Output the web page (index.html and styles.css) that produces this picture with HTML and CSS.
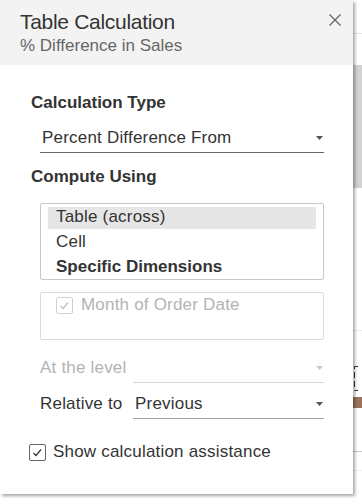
FILE: index.html
```html
<!DOCTYPE html>
<html lang="en">
<head>
    <meta charset="UTF-8">
    <meta name="viewport" content="width=device-width, initial-scale=1.0">
    <title>Table Calculation</title>
    <link rel="stylesheet" href="styles.css">
</head>
<body>
    <div class="screen">
        <div class="dialog">
            <div class="header">
                <div>
                    <div class="title">Table Calculation</div>
                    <div class="subtitle">% Difference in Sales</div>
                </div>
                <button class="close" aria-label="Close">
                    <svg width="12" height="12" viewBox="0 0 12 12">
                        <path d="M0.5 0.5 L11.5 11.5 M11.5 0.5 L0.5 11.5" stroke="#666" stroke-width="1.3" fill="none"/>
                    </svg>
                </button>
            </div>

            <div class="content">
                <h2>Calculation Type</h2>
                <div class="select main-select">
                    <span>Percent Difference From</span>
                    <svg class="arrow" width="7" height="4" viewBox="0 0 7 4"><polygon points="0,0 7,0 3.5,4" fill="#555"/></svg>
                </div>

                <h2 class="spaced">Compute Using</h2>
                <div class="listbox">
                    <div class="item selected">Table (across)</div>
                    <div class="item">Cell</div>
                    <div class="item bold">Specific Dimensions</div>
                </div>

                <div class="dims">
                    <label class="check-row disabled">
                        <span class="box">
                            <svg width="15" height="15" viewBox="0 0 15 15"><path d="M3.5 8 L6 10.5 L11 4.5" stroke="#bdbdbd" stroke-width="1.2" fill="none"/></svg>
                        </span>
                        Month of Order Date
                    </label>
                </div>

                <div class="levels">
                    <span class="label disabled">At the level</span>
                    <div class="select faint">
                        <span></span>
                        <svg class="arrow" width="7" height="4" viewBox="0 0 7 4"><polygon points="0,0 7,0 3.5,4" fill="#c8c8c8"/></svg>
                    </div>
                    <span class="label">Relative to</span>
                    <div class="select mid">
                        <span>Previous</span>
                        <svg class="arrow" width="7" height="4" viewBox="0 0 7 4"><polygon points="0,0 7,0 3.5,4" fill="#555"/></svg>
                    </div>
                </div>

                <label class="check-row assist">
                    <span class="box">
                        <svg width="15" height="15" viewBox="0 0 15 15"><path d="M3.5 8 L6 10.5 L11 4.5" stroke="#333" stroke-width="1.2" fill="none"/></svg>
                    </span>
                    Show calculation assistance
                </label>
            </div>
        </div>

        <div class="sheet">
            <div class="rule top-rule"></div>
            <div class="scroll-thumb"></div>
            <div class="rule soft-rule"></div>
            <svg class="bracket" width="9" height="25" viewBox="0 0 9 25">
                <path d="M5 0.5 H1.5 V24.5 H5" stroke="#333" stroke-width="1" fill="none" stroke-dasharray="6 3"/>
            </svg>
            <div class="bar"></div>
            <div class="rule mid-rule"></div>
            <div class="rule faint-rule"></div>
        </div>
    </div>
</body>
</html>
```

FILE: styles.css
```css
body {
    margin: 0;
    font-family: "Liberation Sans", Arial, sans-serif;
    background-color: #fff;
    color: #333;
}

.screen {
    display: flex;
    width: 362px;
    height: 504px;
    overflow: hidden;
}

.dialog {
    position: relative;
    z-index: 1;
    width: 353px;
    flex-shrink: 0;
    align-self: flex-start;
    background-color: #fff;
    box-shadow: 2px 2px 3px rgba(0, 0, 0, 0.35);
}

.header {
    display: flex;
    justify-content: space-between;
    align-items: flex-start;
    padding: 10px 12px 9px 20px;
    background-color: #f3f3f3;
}

.title {
    font-size: 21px;
    line-height: 24px;
    letter-spacing: -0.3px;
    color: #333;
}

.subtitle {
    margin-top: 2px;
    font-size: 17px;
    line-height: 20px;
    color: #666;
}

.close {
    width: 12px;
    height: 12px;
    margin-top: 4px;
    padding: 0;
    border: none;
    background: none;
    display: flex;
}

.content {
    padding: 28px 29px 32px 31px;
    font-size: 17px;
    line-height: 20px;
    letter-spacing: 0.2px;
}

h2 {
    margin: 0;
    font-size: 17px;
    line-height: 20px;
    font-weight: bold;
    letter-spacing: 0;
    color: #333;
}

h2.spaced {
    margin-top: 14px;
}

.select {
    display: flex;
    justify-content: space-between;
    align-items: center;
    height: 20px;
    padding: 0 1px 4px 2px;
    border-bottom: 1px solid #999;
}

.main-select {
    margin: 15px 0 0 9px;
    border-bottom-color: #666;
}

.select.faint {
    border-bottom-color: #d6d6d6;
}

.select.mid {
    border-bottom-color: #a6a6a6;
}

.listbox {
    display: flex;
    flex-direction: column;
    gap: 3px;
    margin: 16px 0 0 9px;
    padding: 3px 7px 0;
    border: 1px solid #c8c8c8;
    border-radius: 2px;
}

.item {
    padding: 0 8px 3px;
    line-height: 19px;
}

.item.selected {
    background-color: #e6e6e6;
}

.item.bold {
    font-weight: bold;
    letter-spacing: 0;
}

.dims {
    box-sizing: border-box;
    height: 48px;
    margin: 12px 0 0 9px;
    padding: 2px 15px;
    border: 1px solid #dcdcdc;
    border-radius: 2px;
}

.check-row {
    display: flex;
    align-items: center;
    gap: 8px;
    height: 20px;
}

.box {
    box-sizing: border-box;
    display: flex;
    align-items: center;
    justify-content: center;
    width: 17px;
    height: 17px;
    border: 1px solid #666;
    border-radius: 2px;
}

.disabled {
    color: #b3b3b3;
}

.check-row.disabled .box {
    border-color: #d0d0d0;
}

.levels {
    display: grid;
    grid-template-columns: 93px 1fr;
    row-gap: 11px;
    margin: 18px 0 0 9px;
}

.label {
    line-height: 20px;
}

.assist {
    margin: 23px 0 0 -2px;
    gap: 7px;
}

.sheet {
    flex: 1;
    display: flex;
    flex-direction: column;
}

.rule {
    height: 1px;
    background-color: #e6e6e6;
}

.top-rule {
    margin-top: 33px;
}

.scroll-thumb {
    height: 123px;
    margin-top: 31px;
    background-color: #d2d2d2;
}

.soft-rule {
    margin-top: 142px;
    background-color: #ececec;
}

.bracket {
    margin-top: 35px;
}

.bar {
    height: 11px;
    margin-top: 6px;
    background-color: #9b735e;
}

.mid-rule {
    margin-top: 43px;
    background-color: #c8c8c8;
}

.faint-rule {
    margin-top: 18px;
    background-color: #eeeeee;
}
```
